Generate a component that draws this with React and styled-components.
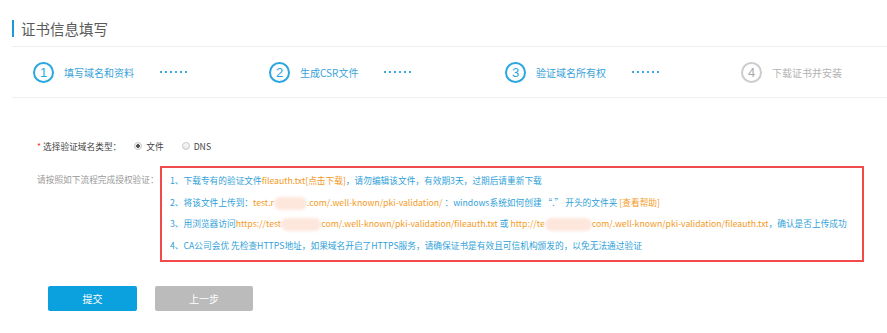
import React from 'react'
import styled, { createGlobalStyle, css } from 'styled-components'

const GlobalStyle = createGlobalStyle`
  html, body {
    margin: 0;
    padding: 0;
    background: #fff;
  }
  body {
    font-family: "Noto Sans CJK SC", "Noto Sans", sans-serif;
    color: #333;
    overflow: hidden;
  }
`

const Page = styled.div`
  padding-left: 12px;
  width: 875px;
`

const Header = styled.div`
  display: flex;
  align-items: center;
  gap: 7px;
  padding-top: 20px;
  padding-bottom: 9px;
  border-bottom: 1px solid #eeeeee;
`

const Accent = styled.span`
  width: 2px;
  height: 17px;
  background: #1a9ad6;
`

const Title = styled.h2`
  margin: 0;
  font-size: 14.5px;
  line-height: 17px;
  font-weight: normal;
  color: #5a5a5a;
`

const Steps = styled.div`
  display: flex;
  align-items: center;
  height: 50px;
  padding-left: 21px;
  border-bottom: 1px solid #f0f0f0;
`

const Step = styled.div`
  flex: ${p => (p.$last ? '0 1 auto' : '0 0 236px')};
  display: flex;
  align-items: center;
`

const Circle = styled.span`
  width: 21px;
  height: 21px;
  box-sizing: border-box;
  border: 2px solid ${p => (p.$done ? '#cccccc' : '#2aa6e0')};
  border-radius: 50%;
  display: flex;
  align-items: center;
  justify-content: center;
  font-family: "Liberation Sans", sans-serif;
  font-size: 13px;
  color: ${p => (p.$done ? '#aaa' : '#2aa6e0')};
`

const StepLabel = styled.span`
  margin-left: 10px;
  font-size: 10px;
  color: ${p => (p.$done ? '#b4b4b4' : '#3aa3da')};
`

const Dots = styled.span`
  margin-left: 26px;
  width: 30px;
  height: 2px;
  background: repeating-linear-gradient(to right, #3aa8e0 0 2px, transparent 2px 5px);
`

const Form = styled.div`
  padding-top: 38px;
  padding-left: 25px;
  display: flex;
  flex-direction: column;
  gap: 10px;
`

const Row = styled.div`
  display: flex;
  align-items: ${p => (p.$top ? 'flex-start' : 'center')};
  height: ${p => (p.$top ? 'auto' : '20px')};
  font-size: 8.7px;
`

const Label = styled.span`
  white-space: nowrap;
  color: ${p => (p.$muted ? '#999' : '#444')};
  ${p =>
    p.$width &&
    css`
      flex: 0 0 ${p.$width}px;
      line-height: 21.5px;
      padding-top: 3px;
    `}
`

const Req = styled.span`
  color: #e33;
  margin-right: 2px;
`

const Radios = styled.div`
  display: flex;
  align-items: center;
  margin-left: 13px;
  gap: 18px;
`

const Radio = styled.label`
  display: flex;
  align-items: center;
  gap: 4px;
  color: #444;
  &::before {
    content: '';
    width: 8px;
    height: 8px;
    box-sizing: border-box;
    border-radius: 50%;
    border: 1px solid #c8c8c8;
    background: ${p =>
      p.$checked
        ? 'radial-gradient(circle, #555 0 1.6px, #f0f0f0 2px)'
        : 'linear-gradient(#fafafa, #e6e6e6)'};
  }
`

const Notice = styled.div`
  width: 704px;
  box-sizing: border-box;
  border: 2px solid #f04a4a;
  padding: 2px 8px 4px;
`

const Line = styled.div`
  line-height: 21.5px;
  color: #2f9fd8;
  white-space: nowrap;
`

const Hl = styled.span`
  color: #f39a1e;
`

const Mask = styled.span`
  display: inline-block;
  width: ${p => p.$w}px;
  height: 13px;
  vertical-align: middle;
  border-radius: 7px;
  background: #fde6dc;
  filter: blur(1.5px);
`

const Actions = styled.div`
  display: flex;
  gap: 18px;
  padding-left: 36px;
  margin-top: 24px;
`

const Button = styled.button`
  width: ${p => (p.$primary ? 89 : 98)}px;
  height: 25px;
  border: none;
  border-radius: 2px;
  font-family: inherit;
  font-size: 10px;
  color: #fff;
  background: ${p => (p.$primary ? '#0aa1de' : '#bbbbbb')};
`

const steps = [
  { n: 1, label: '填写域名和资料' },
  { n: 2, label: '生成CSR文件' },
  { n: 3, label: '验证域名所有权' },
  { n: 4, label: '下载证书并安装', done: true },
]

const App = () => {
  return (
    <Page>
      <GlobalStyle />
      <Header>
        <Accent />
        <Title>证书信息填写</Title>
      </Header>
      <Steps>
        {steps.map(s => (
          <Step key={s.n} $last={s.done}>
            <Circle $done={s.done}>{s.n}</Circle>
            <StepLabel $done={s.done}>{s.label}</StepLabel>
            {!s.done && <Dots />}
          </Step>
        ))}
      </Steps>
      <Form>
        <Row>
          <Label>
            <Req>*</Req>选择验证域名类型：
          </Label>
          <Radios>
            <Radio $checked>文件</Radio>
            <Radio>DNS</Radio>
          </Radios>
        </Row>
        <Row $top>
          <Label $muted $width={123}>请按照如下流程完成授权验证：</Label>
          <Notice>
            <Line>
              1、下载专有的验证文件<Hl>fileauth.txt[点击下载]</Hl>，请勿编辑该文件，有效期3天，过期后请重新下载
            </Line>
            <Line>
              2、将该文件上传到：<Hl>test.r<Mask $w={33} />.com/.well-known/pki-validation/</Hl> ：windows系统如何创建 “.” 开头的文件夹 <Hl>[查看帮助]</Hl>
            </Line>
            <Line>
              3、用浏览器访问<Hl>https://test<Mask $w={40} />com/.well-known/pki-validation/fileauth.txt</Hl> 或 <Hl>http://te<Mask $w={47} />com/.well-known/pki-validation/fileauth.txt</Hl>，确认是否上传成功
            </Line>
            <Line>
              4、CA公司会优 先检查HTTPS地址，如果域名开启了HTTPS服务，请确保证书是有效且可信机构颁发的，以免无法通过验证
            </Line>
          </Notice>
        </Row>
      </Form>
      <Actions>
        <Button $primary>提交</Button>
        <Button>上一步</Button>
      </Actions>
    </Page>
  )
}

export default App
